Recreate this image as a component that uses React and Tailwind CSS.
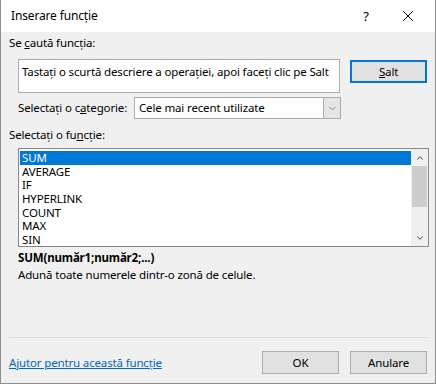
import { ChevronDown, ChevronUp } from 'lucide-react';

const functions = ['SUM', 'AVERAGE', 'IF', 'HYPERLINK', 'COUNT', 'MAX', 'SIN'];

const WinButton = ({ children, focused, className = '' }) => (
  <button
    className={`h-[23px] w-[77px] bg-[#e1e1e1] text-black ${
      focused ? 'border-2 border-[#0078d7]' : 'border border-[#adadad]'
    } ${className}`}
  >
    {children}
  </button>
);

export default function App() {
  return (
    <div
      className="w-[436px] h-[384px] flex flex-col bg-[#f0f0f0] border-x border-b border-[#8e8e8e] text-[11.5px] tracking-[-0.15px] text-black leading-4"
      style={{ fontFamily: '"Noto Sans", "Open Sans", sans-serif' }}
    >
      {/* title bar */}
      <div className="h-8 bg-white flex items-center shrink-0">
        <span className="pl-[10px] flex-1 text-[12px]">Inserare funcție</span>
        <span className="w-[20px] text-center text-[13px] mr-[26px]">?</span>
        <svg width="12" height="12" viewBox="0 0 12 12" className="mr-[21px]">
          <path d="M1 1 L11 11 M11 1 L1 11" stroke="#111" strokeWidth="1" />
        </svg>
      </div>

      <div className="px-2 flex flex-col flex-1">
        <div className="mt-[3px]">
          Se <span className="underline">c</span>aută funcția:
        </div>

        <div className="flex mt-2 pl-[9px]">
          <div className="w-[323px] h-[34px] bg-white border border-[#abadb3] px-[3px] pt-[4px] whitespace-nowrap overflow-hidden">
            Tastați o scurtă descriere a operației, apoi faceți clic pe Salt
          </div>
          <WinButton focused className="ml-[10px] mt-px">
            <span className="underline">S</span>alt
          </WinButton>
        </div>

        <div className="flex items-center mt-1 pl-[9px] w-[332px]">
          <span className="flex-1 whitespace-nowrap">
            Selectați o c<span className="underline">a</span>tegorie:
          </span>
          <div className="w-[207px] h-[22px] bg-white border border-[#acacac] flex items-center">
            <span className="flex-1 pl-[4px] whitespace-nowrap">Cele mai recent utilizate</span>
            <div className="w-[17px] h-full bg-[#e5e5e5] border-l border-[#acacac] flex items-center justify-center">
              <ChevronDown size={11} strokeWidth={1.5} color="#606060" />
            </div>
          </div>
        </div>

        <div className="mt-2">
          Selectați o fu<span className="underline">n</span>cție:
        </div>

        <div className="ml-[9px] mt-[5px] w-[411px] h-[99px] bg-white border border-[#828790] flex">
          <div className="flex-1 pt-[2px] pl-px">
            {functions.map((f, i) => (
              <div
                key={f}
                className={`h-[13.67px] leading-[13.67px] pl-[2px] ${
                  i === 0 ? 'bg-[#0078d7] text-white' : ''
                }`}
              >
                {f}
              </div>
            ))}
          </div>
          <div className="w-[17px] bg-[#f0f0f0] flex flex-col items-center">
            <div className="h-[17px] flex items-center justify-center">
              <ChevronUp size={10} strokeWidth={2.5} color="#606060" />
            </div>
            <div className="w-[15px] h-[41px] bg-[#cdcdcd]"></div>
            <div className="flex-1"></div>
            <div className="h-[17px] flex items-center justify-center">
              <ChevronDown size={10} strokeWidth={2.5} color="#606060" />
            </div>
          </div>
        </div>

        <div className="mt-[3px] pl-[9px] font-bold">SUM(număr1;număr2;...)</div>
        <div className="mt-px pl-[9px]">Adună toate numerele dintr-o zonă de celule.</div>

        <div className="flex-1"></div>
        <div className="h-px bg-[#dcdcdc]"></div>
        <div className="flex items-center mt-[13px] mb-[9px] h-[23px]">
          <a href="#" className="text-[#0066cc] underline flex-1">
            Ajutor pentru această funcție
          </a>
          <WinButton>OK</WinButton>
          <WinButton className="ml-[11px]">Anulare</WinButton>
        </div>
      </div>
    </div>
  );
}
